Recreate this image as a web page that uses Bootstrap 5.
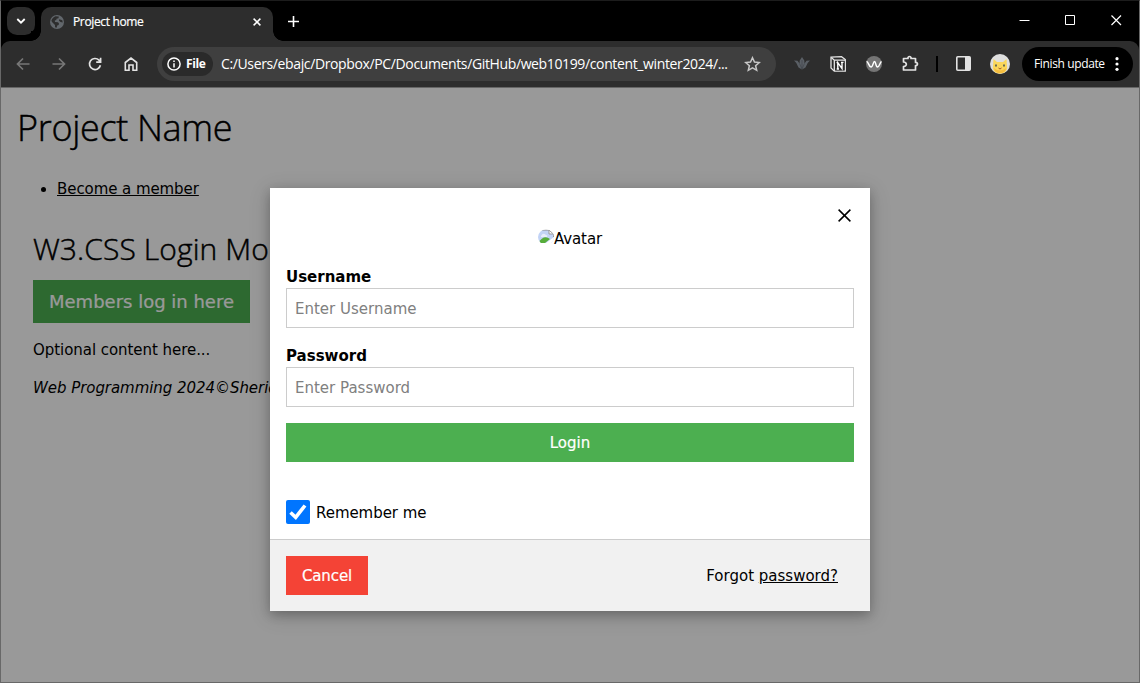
<!DOCTYPE html>
<html lang="en">
<head>
<meta charset="utf-8">
<meta name="viewport" content="width=device-width, initial-scale=1">
<title>Project home</title>
<link href="https://cdn.jsdelivr.net/npm/bootstrap@5.3.0/dist/css/bootstrap.min.css" rel="stylesheet">
<style>
body{font-family:"DejaVu Sans",Verdana,sans-serif;font-size:15px;line-height:22px;color:#000;background:#fff}
svg{display:block;flex:none}
.window{height:683px;border:1px solid #686868;border-top-color:#1c1c1c;background:#000}
.ui{font-family:"Open Sans","Segoe UI",sans-serif;color:#fff;font-size:12px}
.tabstrip{height:40px;padding-left:6px;padding-top:6px}
.tab-search{width:28px;height:28px;border-radius:10px;background:#2d2d2d}
.tab-active{width:232px;height:34px;margin-left:6px;padding:0 12px 4px 9px;border-radius:10px 10px 0 0;background:#2d2d2d;position:relative}
.tab-active::before,.tab-active::after{content:"";position:absolute;bottom:0;width:10px;height:10px}
.tab-active::before{left:-10px;background:radial-gradient(circle at 0 0,#000 9.5px,#2d2d2d 10px)}
.tab-active::after{right:-10px;background:radial-gradient(circle at 100% 0,#000 9.5px,#2d2d2d 10px)}
.tab-title{margin-left:9px;font-size:12px;letter-spacing:-.35px;-webkit-text-stroke:.2px}
.new-tab{margin:9px 0 0 15px}
.win-controls{padding-top:8px;padding-right:17px;gap:35px}
.toolbar{height:47px;border-radius:9px 9px 0 0;background:#2d2d2d;border-bottom:1px solid #666;padding:5px 6px 6px 14px}
.nav-ic{width:16px;margin-right:20px}
.omnibox{width:619px;height:34px;margin-left:-2px;border-radius:17px;background:#3f3f3f;padding:0 15px 0 5px;flex:none}
.chip{width:51px;height:24px;border-radius:12px;background:#2a2a2a;padding-left:5px;gap:5px;font-weight:700;font-size:12px;letter-spacing:-.4px;flex:none}
.address{font-size:14px;margin-left:8px;letter-spacing:-.37px}
.ext{margin-left:20px}
.divider{width:2px;height:16px;background:#000;margin-left:17px}
.side-panel{margin-left:18px}
.profile{margin-left:19px}
.update{width:111px;height:34px;border-radius:17px;background:#000;margin-left:12px;padding:0 12px;flex:none}
.update-text{letter-spacing:-.37px}
.viewport{position:relative;background:#fff}
.page{padding:17px 16px 0;white-space:nowrap}
.page h1,.page h2{font-family:"Open Sans","Segoe UI",sans-serif;font-weight:300;margin:0;-webkit-text-stroke:.45px #000}
.page h1{font-size:36px;line-height:46px;letter-spacing:-.33px}
.page ul{margin:27px 0 0;padding-left:40px}
.page a,.modal-foot a{color:#000}
.page li a{letter-spacing:-.07px}
.section{padding:29px 16px 0}
.section p{letter-spacing:-.05px}
.page h2{font-size:30px;line-height:40px;letter-spacing:.1px}
.btn-flat{border:0;border-radius:0;color:#fff;background:#4caf50;padding:2px 0 0;font-size:15px;-webkit-text-stroke:.2px}
.btn-flat.btn-members{width:217px;height:43px;font-size:18px;margin-top:11px;padding:0}
.overlay{position:absolute;inset:0;background:rgba(0,0,0,.4);padding-top:100px}
.dialog{width:600px;height:423px;margin:0 auto;background:#fff;box-shadow:0 4px 10px rgba(0,0,0,.2),0 4px 20px rgba(0,0,0,.19);position:relative}
.close-x{position:absolute;right:19.5px;top:21px}
.dialog-avatar{padding-top:40px;height:78px}
.avatar-alt{letter-spacing:-.1px}
.dialog-form{padding:0 16px;height:273px}
.dialog-form label.field{display:block;font-weight:700;height:22px;margin-bottom:0}
.dialog-form .form-control + label.field{padding-top:1px;height:23px}
.dialog-form .form-control{height:40px;border:1px solid #ccc;border-radius:0;padding:1px 8px 0;font-size:15px;font-family:inherit;color:#000;margin-bottom:16px}
.form-control::placeholder{color:#808080;opacity:1}
.btn-login{height:39px;width:100%}
.remember{margin-top:38px;gap:6px}
.remember label{padding-top:1px;letter-spacing:-.05px}
.remember input.form-check-input{width:24px;height:24px;margin:0;border:0;border-radius:2px;background:#0075ff url("data:image/svg+xml,%3Csvg xmlns='http://www.w3.org/2000/svg' viewBox='0 0 24 24'%3E%3Cpath d='M4.500 12.500 L9.700 17.300 L19 5.500' fill='none' stroke='white' stroke-width='3.600'/%3E%3C/svg%3E") center/100% no-repeat}
.modal-foot{height:72px;border-top:1px solid #ccc;background:#f1f1f1;padding:0 32px 0 16px}
.btn-flat.btn-cancel{width:82px;height:39px;background:#f44336;letter-spacing:-.1px}
</style>
</head>
<body class="overflow-hidden">
<div class="window d-flex flex-column overflow-hidden">
  <header class="ui">
    <div class="tabstrip d-flex">
      <div class="tab-search d-flex align-items-center justify-content-center"><svg width="10" height="8" viewBox="0 0 10 8"><path d="M1.300 2 5 5.700 8.700 2" fill="none" stroke="#fff" stroke-width="1.800"/></svg></div>
      <div class="tab-active d-flex align-items-center">
        <svg width="14" height="14" viewBox="0 0 14 14"><circle cx="7" cy="7" r="7" fill="#62676c"/><path d="M5.500 1.300 8.800 1.400 8.500 3.200 6.500 3.700 6.300 5 4.800 5.600 5 7 8 7.200 9 8.500 8.600 10 7.200 10.400 6.600 12.700 5 12.300 5 10 2 7 1.400 5.800C2 3.700 3.500 1.900 5.500 1.300Z" fill="#2d2d2d"/><path d="M9.200 4.300 12.300 5.300 12.700 7.400 10.500 7 9 5.800Z" fill="#2d2d2d"/></svg>
        <span class="tab-title">Project home</span>
        <svg class="ms-auto" width="8" height="8" viewBox="0 0 8 8"><path d="M.6.6 7.400 7.400M7.400.6.6 7.400" stroke="#fff" stroke-width="1.500"/></svg>
      </div>
      <svg class="new-tab" width="11" height="11" viewBox="0 0 11 11"><path d="M5.500 0V11M0 5.500H11" stroke="#fff" stroke-width="1.600"/></svg>
      <div class="win-controls ms-auto d-flex">
        <svg width="11" height="11" viewBox="0 0 11 11"><path d="M.5 5.500H10.500" stroke="#fff"/></svg>
        <svg width="11" height="11" viewBox="0 0 11 11"><path d="M.5.5H9.500V9.500H.5Z" fill="none" stroke="#fff"/></svg>
        <svg width="11" height="11" viewBox="0 0 11 11"><path d="M.5.5 10 10M10 .5.5 10" stroke="#fff" stroke-width="1.200"/></svg>
      </div>
    </div>
    <div class="toolbar d-flex align-items-center">
      <svg class="nav-ic" width="16" height="16" viewBox="0 0 16 16"><path d="M14.500 8H3M8 2.500 2.500 8 8 13.500" fill="none" stroke="#777" stroke-width="1.700"/></svg>
      <svg class="nav-ic" width="16" height="16" viewBox="0 0 16 16"><path d="M1.500 8H13M8 2.500 13.500 8 8 13.500" fill="none" stroke="#777" stroke-width="1.700"/></svg>
      <svg class="nav-ic" width="16" height="16" viewBox="0 0 16 16"><path d="M13.400 9.200A5.500 5.500 0 1 1 12 4.200L13.300 5.500M13.600 1.700V6.100H9.200" fill="none" stroke="#e3e3e3" stroke-width="1.700"/></svg>
      <svg class="nav-ic" width="16" height="16" viewBox="0 0 16 16"><path d="M2.300 14.200V6.500L8 2 13.700 6.500V14.200H10V9H6V14.200Z" fill="none" stroke="#e3e3e3" stroke-width="1.600"/></svg>
      <div class="omnibox d-flex align-items-center">
        <div class="chip d-flex align-items-center"><svg width="14" height="14" viewBox="0 0 14 14"><circle cx="7" cy="7" r="6.100" fill="none" stroke="#fff" stroke-width="1.500"/><path d="M7 6.200V10.500M7 3.500V5" stroke="#fff" stroke-width="1.500"/></svg><span>File</span></div>
        <span class="address text-nowrap">C:/Users/ebajc/Dropbox/PC/Documents/GitHub/web10199/content_winter2024/...</span>
        <svg class="ms-auto" width="17" height="16" viewBox="0 0 17 16"><path d="M8.500 1.700 10.500 6.100 15.200 6.500 11.600 9.700 12.700 14.300 8.500 11.900 4.300 14.300 5.400 9.700 1.800 6.500 6.500 6.100Z" fill="none" stroke="#c7c7c7" stroke-width="1.500"/></svg>
      </div>
      <svg class="ms-auto" width="16" height="13" viewBox="0 0 16 13"><path d="M8 0 10.300 3.500 10.500 6.500 12.500 3.800 16 3.500 13.700 6 11.500 10.500 8 12.500 4.500 10.500 2.300 6 0 3.500 3.500 3.800 5.500 6.500 5.700 3.500Z" fill="#5a5f65"/><path d="M8 3V12M5.500 6.500 8 12 10.500 6.500" stroke="#3d4146" fill="none" stroke-width=".6"/></svg>
      <svg class="ext" width="16" height="16" viewBox="0 0 16 16"><path d="M1 1.200 11.500.7 15.300 3.500V15.200H4.300L1 12Z" fill="#2a2a2a" stroke="#e6e6e6" stroke-width="1.300"/><path d="M1.300 1.500 4.300 4.200H15M4.300 4.200V15" fill="none" stroke="#e6e6e6" stroke-width="1.300"/><path d="M5.500 5.200H14.500V14.300H5.500Z" fill="#2a2a2a"/><path d="M7.800 13V6.700L12 12.600V6.300M6.500 6.500H8.300M6.700 13H9M11 6.400H13.500" fill="none" stroke="#fff" stroke-width="1.400"/></svg>
      <svg class="ext" width="16" height="16" viewBox="0 0 16 16"><circle cx="8" cy="8" r="8" fill="#757575"/><path d="M.5 5.500C2.500 5.500 2.800 11 5 11S7 5.500 8.500 5.500 9.500 11 11.500 11 14 6 15.500 5.500" fill="none" stroke="#fff" stroke-width="1.500"/></svg>
      <svg class="ext" width="17" height="17" viewBox="0 0 17 17"><path d="M1.500 3.500H6V2.500Q7.500.5 9 2.500V3.500H13.500V7.500H14.500Q16.500 9 14.500 10.500H13.500V15H1.500V11.500Q4.700 11 4.300 9 3.900 7 1.500 7Z" fill="none" stroke="#e3e3e3" stroke-width="1.700" stroke-linejoin="round"/></svg>
      <div class="divider"></div>
      <svg class="side-panel" width="15" height="15" viewBox="0 0 15 15"><rect x=".8" y=".8" width="13.400" height="13.400" rx="1" fill="none" stroke="#e3e3e3" stroke-width="1.600"/><path d="M9 1H14V14H9Z" fill="#e3e3e3"/></svg>
      <svg class="profile" width="20" height="20" viewBox="0 0 20 20"><circle cx="10" cy="10" r="10" fill="#dedede"/><path d="M3.500 5 7 8H13L16.500 5 17 12C18 17 14 19.500 10 19.500S2 17 3 12Z" fill="#fbd75b"/><path d="M4 14Q10 19 16 14 16 19 10 19.300 4 19 4 14Z" fill="#f6bd3e"/><path d="M6 10.500V12.500M14 10.500V12.500" stroke="#3b4a4f" stroke-width="1.500"/><path d="M8.500 14 10 15 11.500 14" fill="none" stroke="#a3562a"/></svg>
      <div class="update d-flex align-items-center justify-content-between text-nowrap"><span class="update-text">Finish update</span><svg width="8" height="14" viewBox="0 0 8 14"><g fill="#fff"><circle cx="4" cy="1.700" r="1.600"/><circle cx="4" cy="7" r="1.600"/><circle cx="4" cy="12.300" r="1.600"/></g></svg></div>
    </div>
  </header>
  <main class="viewport flex-grow-1 overflow-hidden">
    <div class="page">
      <h1>Project Name</h1>
      <ul><li><a href="#">Become a member</a></li></ul>
      <section class="section">
        <h2>W3.CSS Login Modal</h2>
        <button class="btn btn-flat btn-members" type="button">Members log in here</button>
        <p class="mb-3 mt-3">Optional content here...</p>
        <p class="m-0 fst-italic">Web Programming 2024©Sheridan College</p>
      </section>
    </div>
    <div class="overlay">
      <div class="dialog">
        <svg class="close-x" width="13" height="13" viewBox="0 0 13 13"><path d="M.6.6 12.400 12.400M12.400.6.6 12.400" stroke="#000" stroke-width="1.500"/></svg>
        <div class="dialog-avatar d-flex justify-content-center align-items-start"><svg style="margin-top:1px" width="16" height="16" viewBox="0 0 16 16"><defs><clipPath id="oval"><ellipse cx="8" cy="8" rx="8" ry="7.500"/></clipPath></defs><g clip-path="url(#oval)"><path d="M0 1H11L16 5V14H0Z" fill="#c2d3f6"/><path d="M0 14Q6 5 12 10L7 14Z" fill="#57ad3b"/><path d="M16 8 8 14H7L5 16H16ZM0 14H16V16H0Z" fill="#fff"/><path d="M0 1H11L15.500 5V8" fill="none" stroke="#8c8c8c"/><path d="M11 1V5H15.500Z" fill="#fff" stroke="#999"/><path d="M3 7Q5 3 8 6Q10 6 9 8H3Z" fill="#fff" opacity=".6"/></g></svg><span class="avatar-alt">Avatar</span></div>
        <div class="dialog-form">
          <label class="field" for="user">Username</label>
          <input class="form-control" id="user" placeholder="Enter Username">
          <label class="field" for="pass">Password</label>
          <input class="form-control" id="pass" type="password" placeholder="Enter Password">
          <button class="btn btn-flat btn-login" type="button">Login</button>
          <div class="remember d-flex align-items-center"><input class="form-check-input" id="rem" type="checkbox" checked><label for="rem">Remember me</label></div>
        </div>
        <div class="modal-foot d-flex align-items-center justify-content-between">
          <button class="btn btn-flat btn-cancel" type="button">Cancel</button>
          <span class="forgot">Forgot <a href="#">password?</a></span>
        </div>
      </div>
    </div>
  </main>
</div>
</body>
</html>
